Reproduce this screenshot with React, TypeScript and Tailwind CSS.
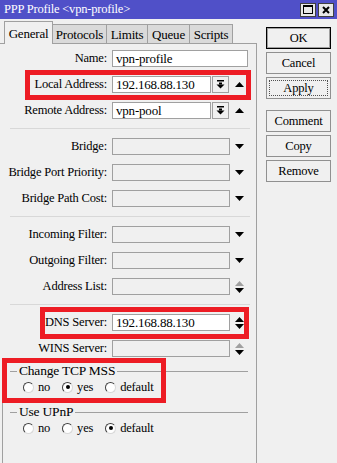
import React from 'react';

const Up = ({ gray }: { gray?: boolean }) => (
  <svg width="9" height="5" viewBox="0 0 9 5" className="block">
    <path d="M4.5 0L9 5H0Z" fill={gray ? '#a0a0a0' : '#000'} />
  </svg>
);

const Down = ({ gray }: { gray?: boolean }) => (
  <svg width="9" height="5" viewBox="0 0 9 5" className="block">
    <path d="M0 0H9L4.5 5Z" fill={gray ? '#a0a0a0' : '#000'} />
  </svg>
);

const DropIcon = () => (
  <svg width="9" height="9" viewBox="0 0 9 9" className="block">
    <rect x="1" y="0" width="7" height="1.5" fill="#000" />
    <rect x="3" y="2.5" width="3" height="2" fill="#000" />
    <path d="M0.5 4.5H8.5L4.5 8.5Z" fill="#000" />
  </svg>
);

const Row = ({ label, children }: { label: string; children: React.ReactNode }) => (
  <div className="flex h-[17px] items-center">
    <div className="w-[107px] text-right text-[12.5px] leading-none whitespace-nowrap">{label}</div>
    <div className="ml-[5px] flex items-center">{children}</div>
  </div>
);

const Field = ({ w, value, off }: { w: string; value?: string; off?: boolean }) => (
  <div
    className={`${w} h-[17px] flex items-center border border-[#a0a0a0] px-[3px] text-[13px] leading-none ${
      off ? 'bg-[#f0f0f0]' : 'bg-white'
    }`}
  >
    {value}
  </div>
);

const DropBtn = () => (
  <div className="ml-px flex h-[17px] w-[17px] items-center justify-center border border-[#a0a0a0] bg-[#f0f0f0]">
    <DropIcon />
  </div>
);

const Sep = () => <div className="mr-[6px] ml-[10px] h-px bg-[#d8d8d8]" />;

const Radio = ({ label, on }: { label: string; on?: boolean }) => (
  <div className="flex items-center gap-[4px]">
    <div className="flex h-[11px] w-[11px] items-center justify-center rounded-full border border-t-[#404040] border-l-[#404040] border-r-[#d8d8d8] border-b-[#d8d8d8] bg-white">
      {on && <div className="h-[4px] w-[4px] rounded-full bg-black" />}
    </div>
    <span className="leading-none">{label}</span>
  </div>
);

const Group = ({ title, value }: { title: string; value: string }) => (
  <div>
    <div className="flex h-[12px] items-center pr-[8px]">
      <div className="ml-[7px] h-px w-[7px] bg-[#a0a0a0]" />
      <span className="px-[2px] text-[13.5px] leading-none">{title}</span>
      <div className="h-px flex-1 bg-[#a0a0a0]" />
    </div>
    <div className="mt-[3px] flex h-[14px] items-center gap-[12px] pl-[20px] text-[12.5px]">
      <Radio label="no" on={value === 'no'} />
      <Radio label="yes" on={value === 'yes'} />
      <Radio label="default" on={value === 'default'} />
    </div>
  </div>
);

const Btn = ({ label, kind }: { label: string; kind?: 'default' | 'focus' }) => (
  <div
    className={`flex h-[22px] w-[65px] items-center justify-center bg-[#f0f0f0] ${
      kind === 'default' ? 'border border-black shadow-[inset_0_0_0_1px_#a0a0a0]' : 'border border-[#909090]'
    }`}
  >
    {kind === 'focus' ? (
      <div className="flex h-[16px] w-[59px] items-center justify-center border border-dotted border-[#505050] leading-none">
        {label}
      </div>
    ) : (
      <span className="leading-none">{label}</span>
    )}
  </div>
);

const tabs = [
  { t: 'Protocols', w: 'w-[54px]' },
  { t: 'Limits', w: 'w-[41px]' },
  { t: 'Queue', w: 'w-[42px]' },
  { t: 'Scripts', w: 'w-[43px]' },
];

export default function App() {
  return (
    <div className="relative h-[463px] w-[337px] overflow-hidden bg-[#f0f0f0] font-['Liberation_Serif',serif] text-[12px] tracking-[-0.2px] text-black">
      {/* title bar */}
      <div className="flex h-[19px] items-center bg-[#5050c8] pr-[3px] pl-[4px]">
        <span className="flex-1 text-[12.5px] leading-none text-white">PPP Profile &lt;vpn-profile&gt;</span>
        <div className="flex gap-[2px]">
          <div className="flex h-[14px] w-[16px] items-center justify-center border border-[#404040] bg-[#e8e8e8]">
            <div className="h-[9px] w-[10px] border border-t-2 border-black" />
          </div>
          <div className="flex h-[14px] w-[16px] items-center justify-center border border-[#404040] bg-[#e8e8e8]">
            <svg width="8" height="8" viewBox="0 0 8 8">
              <path d="M1 1L7 7M7 1L1 7" stroke="#000" strokeWidth="2" />
            </svg>
          </div>
        </div>
      </div>

      <div className="flex">
        {/* left: tabs + panel */}
        <div className="w-[257px]">
          <div className="mt-[3px] flex h-[22px] items-end border-b border-[#a0a0a0] pl-[4px] text-[13px]">
            <div className="-mb-px flex h-[23px] w-[49px] items-center justify-center border border-b-0 border-[#a0a0a0] bg-[#f0f0f0] leading-none">
              General
            </div>
            {tabs.map(({ t, w }) => (
              <div
                key={t}
                className={`${w} flex h-[19px] items-center justify-center border border-b-0 border-l-0 border-[#a0a0a0] bg-[#dadada] leading-none`}
              >
                {t}
              </div>
            ))}
          </div>

          <div className="h-[420px] border-r border-[#a0a0a0] pt-[6px]">
            <div className="flex flex-col gap-[9px]">
              <Row label="Name:">
                <Field w="w-[136px]" value="vpn-profile" />
              </Row>
              <Row label="Local Address:">
                <Field w="w-[99px]" value="192.168.88.130" />
                <DropBtn />
                <div className="ml-[6px]">
                  <Up />
                </div>
              </Row>
              <Row label="Remote Address:">
                <Field w="w-[99px]" value="vpn-pool" />
                <DropBtn />
                <div className="ml-[6px]">
                  <Up />
                </div>
              </Row>
              <Sep />
              <Row label="Bridge:">
                <Field w="w-[118px]" off />
                <div className="ml-[5px]">
                  <Down />
                </div>
              </Row>
              <Row label="Bridge Port Priority:">
                <Field w="w-[118px]" off />
                <div className="ml-[5px]">
                  <Down />
                </div>
              </Row>
              <Row label="Bridge Path Cost:">
                <Field w="w-[118px]" off />
                <div className="ml-[5px]">
                  <Down />
                </div>
              </Row>
              <Sep />
              <Row label="Incoming Filter:">
                <Field w="w-[118px]" off />
                <div className="ml-[5px]">
                  <Down />
                </div>
              </Row>
              <Row label="Outgoing Filter:">
                <Field w="w-[118px]" off />
                <div className="ml-[5px]">
                  <Down />
                </div>
              </Row>
              <Row label="Address List:">
                <Field w="w-[118px]" off />
                <div className="ml-[5px] flex flex-col gap-[2px]">
                  <Up gray />
                  <Down />
                </div>
              </Row>
              <Sep />
              <Row label="DNS Server:">
                <Field w="w-[118px]" value="192.168.88.130" />
                <div className="ml-[5px] flex flex-col gap-[2px]">
                  <Up />
                  <Down />
                </div>
              </Row>
              <Row label="WINS Server:">
                <Field w="w-[118px]" off />
                <div className="ml-[5px] flex flex-col gap-[2px]">
                  <Up gray />
                  <Down />
                </div>
              </Row>
            </div>

            <div className="mt-[8px] ml-[2px] h-[120px] border-l border-[#a0a0a0]">
              <Group title="Change TCP MSS" value="yes" />
              <div className="mt-[12px]">
                <Group title="Use UPnP" value="default" />
              </div>
            </div>
          </div>
        </div>

        {/* right: buttons */}
        <div className="flex flex-col pt-[8px] pl-[9px] text-[12.5px]">
          <div className="flex flex-col gap-[3px]">
            <Btn label="OK" kind="default" />
            <Btn label="Cancel" />
            <Btn label="Apply" kind="focus" />
          </div>
          <div className="mt-[11px] flex flex-col gap-[3px]">
            <Btn label="Comment" />
            <Btn label="Copy" />
            <Btn label="Remove" />
          </div>
        </div>
      </div>

      {/* red highlight overlays */}
      <div className="pointer-events-none absolute top-[70px] left-[25px] h-[30px] w-[226px] border-[5px] border-[#ed1c24]" />
      <div className="pointer-events-none absolute top-[307px] left-[40px] h-[32px] w-[209px] border-[5px] border-[#ed1c24]" />
      <div className="pointer-events-none absolute top-[358px] left-[2px] h-[45px] w-[164px] border-[5px] border-[#ed1c24]" />
    </div>
  );
}
